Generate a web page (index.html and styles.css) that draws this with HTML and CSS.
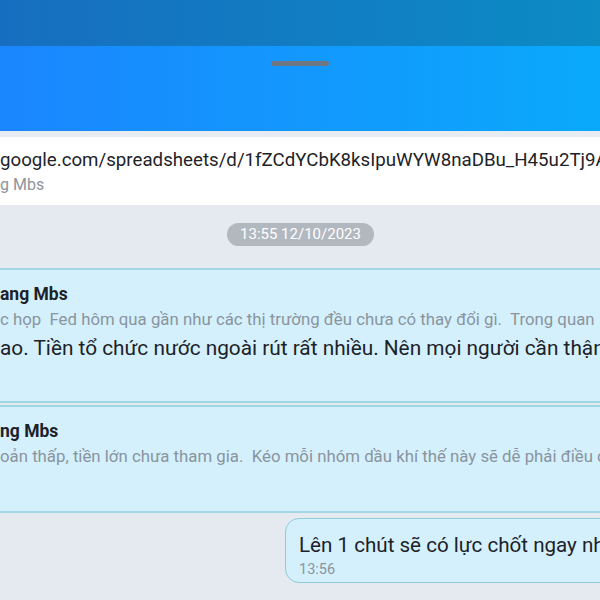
FILE: index.html
```html
<!DOCTYPE html>
<html>
    <head>
        <meta charset="utf-8">
        <link rel="stylesheet" href="styles.css">
    </head>
<body>
    <div class="status-bar"></div>
    <header class="sheet-head">
        <div class="handle"></div>
    </header>
    <div class="gap-strip"></div>
    <section class="pinned">
        <p class="pinned-link">google.com/spreadsheets/d/1fZCdYCbK8ksIpuWYW8naDBu_H45u2Tj9A</p>
        <p class="pinned-from">g Mbs</p>
    </section>
    <main class="chat">
        <div class="date-row">
            <span class="date-pill">13:55 12/10/2023</span>
        </div>
        <div class="card card-first">
            <p class="card-name">ang Mbs</p>
            <p class="card-quote">c họp&nbsp; Fed hôm qua gần như các thị trường đều chưa có thay đổi gì.&nbsp; Trong quan</p>
            <p class="card-text">ao. Tiền tổ chức nước ngoài rút rất nhiều. Nên mọi người cần thận</p>
        </div>
        <div class="card card-second">
            <p class="card-name">ng Mbs</p>
            <p class="card-quote">oản thấp, tiền lớn chưa tham gia.&nbsp; Kéo mỗi nhóm dầu khí thế này sẽ dễ phải điều c</p>
        </div>
        <div class="mine-row">
            <div class="bubble">
                <p class="bubble-text">Lên 1 chút sẽ có lực chốt ngay nhé</p>
                <p class="bubble-time">13:56</p>
            </div>
        </div>
    </main>
</body>
</html>
```

FILE: styles.css
```css
* {
    padding: 0;
    margin: 0;
}
html, body {
    width: 600px;
    height: 600px;
    overflow: hidden;
}
body {
    font-family: Roboto, "Noto Sans", sans-serif;
    background-color: #e5eaf1;
    color: #1c2228;
}
p {
    white-space: nowrap;
}
.status-bar {
    height: 46px;
    background: linear-gradient(to right, #176ec0, #0c8bc5);
}
.sheet-head {
    height: 85px;
    background: linear-gradient(to right, #1b86ff, #0aa9fb);
    display: flex;
    justify-content: center;
}
.handle {
    width: 58px;
    height: 5px;
    margin-top: 15px;
    border-radius: 2px;
    background-color: #6f7782;
}
.gap-strip {
    height: 6px;
    background-color: #e6ecf2;
}
.pinned {
    height: 68px;
    background-color: #ffffff;
    padding-top: 11px;
    box-sizing: border-box;
}
.pinned-link {
    font-size: 18.7px;
    line-height: 24px;
    color: #1e2328;
}
.pinned-from {
    font-size: 16px;
    line-height: 20px;
    margin-top: 3px;
    color: #8d949b;
}
.date-row {
    display: flex;
    justify-content: center;
    padding: 18px 0 22px;
}
.date-pill {
    background-color: #b2b8bf;
    color: #ffffff;
    font-size: 15px;
    line-height: 23px;
    padding: 0 13px;
    border-radius: 12px;
    margin-left: 1px;
}
.card {
    background-color: #d4f0fd;
    border-top: 2px solid #a3d6e4;
    border-bottom: 2px solid #a3d6e4;
    box-sizing: border-box;
    padding-top: 13px;
}
.card-first {
    height: 135px;
}
.card-second {
    height: 108px;
    margin-top: 2px;
}
.card-name {
    font-size: 17.5px;
    font-weight: bold;
    line-height: 22px;
}
.card-quote {
    font-size: 16.8px;
    line-height: 22px;
    margin-top: 3px;
    color: #8a949d;
}
.card-text {
    font-size: 20.8px;
    line-height: 28px;
    margin-top: 4px;
}
.mine-row {
    display: flex;
    padding: 5px 0 0 285px;
}
.bubble {
    flex-shrink: 0;
    width: 340px;
    height: 65px;
    box-sizing: border-box;
    border: 1px solid #8fcbd9;
    border-radius: 14px;
    background-color: #d4f0fd;
    padding: 13px 0 0 13px;
    overflow: hidden;
}
.bubble-text {
    font-size: 20.6px;
    line-height: 26px;
}
.bubble-time {
    font-size: 14.5px;
    line-height: 18px;
    color: #8a949d;
    margin-top: 3px;
}
```
